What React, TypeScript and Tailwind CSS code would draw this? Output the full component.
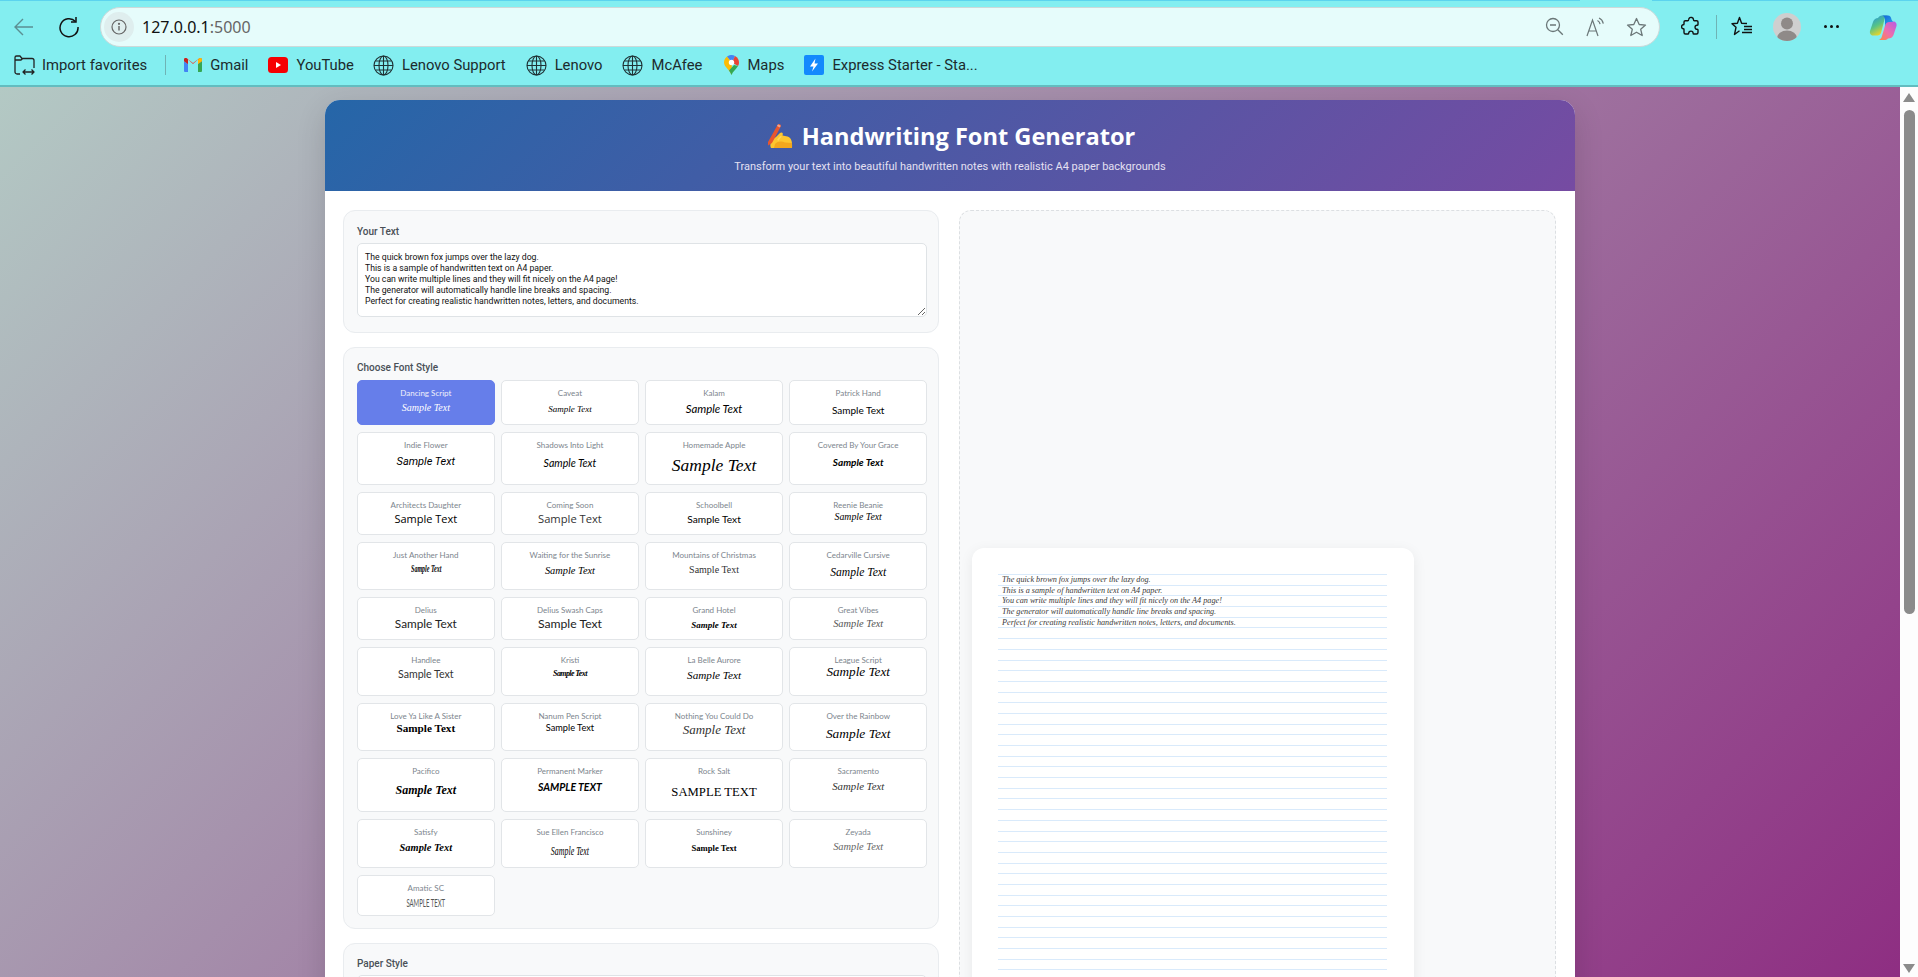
import React from "react";

const SI = "font-['Liberation_Serif',serif] italic";
const SB = "font-['Liberation_Serif',serif] italic font-bold";
const SR = "font-['Liberation_Serif',serif]";
const SRB = "font-['Liberation_Serif',serif] font-bold";
const LA = "font-['Lato',sans-serif]";
const LI = "font-['Lato',sans-serif] italic";
const LBI = "font-['Lato',sans-serif] italic font-bold";
const OS = "font-['Open_Sans',sans-serif]";
const RI = "font-['Roboto',sans-serif] italic";

type Tile = { n: string; c: string };
const rows: { h: string; tiles: Tile[] }[] = [
  { h: "h-[45px]", tiles: [
    { n: "Dancing Script", c: `${SI} text-[10px] mt-[1px]` },
    { n: "Caveat", c: `${SI} text-[9px] mt-[2px]` },
    { n: "Kalam", c: `${LI} text-[11.4px] mt-[2px]` },
    { n: "Patrick Hand", c: `${LA} text-[10px] mt-[3px]` },
  ]},
  { h: "h-[53px]", tiles: [
    { n: "Indie Flower", c: `${RI} text-[11px] mt-[3px]` },
    { n: "Shadows Into Light", c: `${LI} text-[10.6px] mt-[4px]` },
    { n: "Homemade Apple", c: `${SI} text-[17.5px] mt-[6px]` },
    { n: "Covered By Your Grace", c: `${LBI} text-[10px] mt-[3px]` },
  ]},
  { h: "h-[43px]", tiles: [
    { n: "Architects Daughter", c: `${OS} text-[11px]` },
    { n: "Coming Soon", c: `${OS} text-[11.2px] text-[#333333]` },
    { n: "Schoolbell", c: `${LA} text-[10.2px]` },
    { n: "Reenie Beanie", c: `${SI} text-[9.8px] -mt-[2px]` },
  ]},
  { h: "h-[48px]", tiles: [
    { n: "Just Another Hand", c: `${SB} text-[10px] scale-x-[0.6] mt-[0px]` },
    { n: "Waiting for the Sunrise", c: `${SI} text-[10.4px] mt-[2px]` },
    { n: "Mountains of Christmas", c: `${SR} text-[10px] mt-[1px] text-[#333333]` },
    { n: "Cedarville Cursive", c: `${SI} text-[11.6px] mt-[4px]` },
  ]},
  { h: "h-[43px]", tiles: [
    { n: "Delius", c: `${LA} text-[11.8px] text-[#222222]` },
    { n: "Delius Swash Caps", c: `${LA} text-[12.2px] text-[#222222]` },
    { n: "Grand Hotel", c: `${SB} text-[9px] mt-[1px]` },
    { n: "Great Vibes", c: `${SI} text-[10.4px] text-[#555555]` },
  ]},
  { h: "h-[49px]", tiles: [
    { n: "Handlee", c: `${LA} text-[10.6px] text-[#333333]` },
    { n: "Kristi", c: `${SB} text-[8px] tracking-[-0.6px]` },
    { n: "La Belle Aurore", c: `${SI} text-[11.2px] mt-[1px]` },
    { n: "League Script", c: `${SI} text-[13.2px] -mt-[2px]` },
  ]},
  { h: "h-[48px]", tiles: [
    { n: "Love Ya Like A Sister", c: `${SRB} text-[11.2px] -mt-[2px]` },
    { n: "Nanum Pen Script", c: `${LA} text-[9.2px] -mt-[2px]` },
    { n: "Nothing You Could Do", c: `${SI} text-[13px] text-[#333333]` },
    { n: "Over the Rainbow", c: `${SI} text-[13.4px] mt-[4px]` },
  ]},
  { h: "h-[54px]", tiles: [
    { n: "Pacifico", c: `${SB} text-[12px] mt-[5px]` },
    { n: "Permanent Marker", c: `${LBI} text-[10.5px] uppercase mt-[2px]` },
    { n: "Rock Salt", c: `${SR} text-[12.7px] uppercase mt-[7px]` },
    { n: "Sacramento", c: `${SI} text-[10.8px] mt-[1px] text-[#333333]` },
  ]},
  { h: "h-[49px]", tiles: [
    { n: "Satisfy", c: `${SB} text-[10.4px] mt-[2px]` },
    { n: "Sue Ellen Francisco", c: `${SI} text-[12px] scale-x-[0.66] mt-[5px]` },
    { n: "Sunshiney", c: `${SRB} text-[8.6px] mt-[2px]` },
    { n: "Zeyada", c: `${SI} text-[10.4px] mt-[1px] text-[#666666]` },
  ]},
  { h: "h-[41px]", tiles: [
    { n: "Amatic SC", c: `${LA} text-[12px] uppercase scale-x-[0.5] mt-[1px] text-[#555555]` },
  ]},
];

const note = [
  "The quick brown fox jumps over the lazy dog.",
  "This is a sample of handwritten text on A4 paper.",
  "You can write multiple lines and they will fit nicely on the A4 page!",
  "The generator will automatically handle line breaks and spacing.",
  "Perfect for creating realistic handwritten notes, letters, and documents.",
];

function Back() {
  return (
    <svg width="22" height="22" viewBox="0 0 22 22" fill="none" stroke="#5b8f92" strokeWidth="1.4">
      <path d="M2 11h18M10 3l-8 8 8 8" />
    </svg>
  );
}
function Reload() {
  return (
    <svg width="22" height="22" viewBox="0 0 22 22" fill="none" stroke="#111" strokeWidth="1.5">
      <path d="M17.5 5.5A9 9 0 1 0 20 11" />
      <path d="M18 1v5h-5" />
    </svg>
  );
}
function Info() {
  return (
    <svg width="16" height="16" viewBox="0 0 16 16" fill="none" stroke="#666" strokeWidth="1.2">
      <circle cx="8" cy="8" r="7" />
      <path d="M8 7v4.5" strokeWidth="1.4" />
      <circle cx="8" cy="4.8" r=".5" fill="#666" />
    </svg>
  );
}
function ZoomOut() {
  return (
    <svg width="19" height="19" viewBox="0 0 19 19" fill="none" stroke="#6b7778" strokeWidth="1.3">
      <circle cx="8" cy="8" r="6.5" />
      <path d="M5 8h6M12.8 12.8l5 5" />
    </svg>
  );
}
function ReadAloud() {
  return (
    <svg width="20" height="20" viewBox="0 0 20 20" fill="none" stroke="#6b7778" strokeWidth="1.2">
      <path d="M1 19L6.5 3l5.500 16M3 14h7" />
      <path d="M11.500 3.500c1.500.8 2.300 2 2.600 3.600M13 1c2.400 1 3.800 3 4.300 5.600" />
    </svg>
  );
}
function Star({ color = "#6b7778" }: { color?: string }) {
  return (
    <svg width="21" height="20" viewBox="0 0 21 20" fill="none" stroke={color} strokeWidth="1.3" strokeLinejoin="round">
      <path d="M10.5 1.5l2.7 6 6.3.6-4.8 4.2 1.5 6.2-5.7-3.3-5.7 3.3 1.5-6.2L1.5 8.100l6.300-.6z" />
    </svg>
  );
}
function Puzzle() {
  return (
    <svg width="20" height="21" viewBox="0 0 20 21" fill="none" stroke="#111" strokeWidth="1.4" strokeLinejoin="round">
      <path d="M8 2.500c1.500-2 4.500-1 4.500 1.200 0 .6.300 1 .8 1h2.400c.8 0 1.300.5 1.300 1.300v2.500c0 .5-.4.8-1 .8-2.500 0-2.800 4 .2 4 .5 0 .8.3.8.8v2.400c0 1-.6 1.500-1.500 1.500H13c-.6 0-.9-.3-.9-.8 0-2.800-4.400-2.800-4.400 0 0 .5-.3.8-.9.8H4.500c-.9 0-1.500-.6-1.500-1.500v-3c0-.5-.3-.7-.8-.7-2 0-2.200-4.100 0-4.100.5 0 .8-.3.800-.8V6c0-.8.500-1.300 1.300-1.300h2.500c.6 0 1-.9 1.200-2.200z" />
    </svg>
  );
}
function FavList() {
  return (
    <svg width="22" height="21" viewBox="0 0 22 21" fill="none" stroke="#111" strokeWidth="1.4" strokeLinejoin="round">
      <path d="M16 7.500l-5.400-.3L8.500 1.500 6.400 7.200 1 7.700l4 3.600-1.500 7.200 5-3.700" />
      <path d="M13 10.500h8M13 13.500h8M11 16.500h10" />
    </svg>
  );
}
function Avatar() {
  return (
    <div className="w-[28px] h-[28px] rounded-full bg-[#cfcfcf] overflow-hidden">
      <svg width="28" height="28" viewBox="0 0 28 28">
        <circle cx="14" cy="10.500" r="6" fill="#8f8a88" />
        <ellipse cx="14" cy="25" rx="10" ry="7.500" fill="#8f8a88" />
      </svg>
    </div>
  );
}
function Copilot() {
  return (
    <svg width="28" height="28" viewBox="0 0 28 28">
      <defs>
        <linearGradient id="cpa" x1="0" y1="0" x2="0.5" y2="1">
          <stop offset="0" stopColor="#1e8fe8" />
          <stop offset="0.55" stopColor="#57c486" />
          <stop offset="1" stopColor="#f4d522" />
        </linearGradient>
        <linearGradient id="cpb" x1="1" y1="0" x2="0" y2="1">
          <stop offset="0" stopColor="#b65be6" />
          <stop offset="0.55" stopColor="#ef6fa8" />
          <stop offset="1" stopColor="#fb8a3c" />
        </linearGradient>
        <linearGradient id="cpc" x1="0" y1="0" x2="1" y2="1">
          <stop offset="0" stopColor="#1263d8" />
          <stop offset="1" stopColor="#2aa8ec" />
        </linearGradient>
      </defs>
      <path d="M9 5c1-1.500 2-2.500 4-2.500h6c-2 .5-3 2-3.500 4L12 20c-.5 1.500-2 2.500-3.500 2.500H4C1.500 22.500 0.500 20 1 18l3-9c.8-2.500 3-4 5-4z" fill="url(#cpa)" />
      <path d="M19 25.500c-1 1-2 1.500-4 1.500H9.500c2-.5 3-2 3.500-4l3.500-12c.5-1.500 2-2.500 3.500-2.500h4.500c2.500 0 3.500 2.500 3 4.500l-3 9c-.8 2.500-3 3.500-5.500 3.500z" fill="url(#cpb)" />
      <path d="M13 2.500h6c2 0 3 1.500 3.500 4L24 9h-4c-1.500 0-3 1-3.500 2.500l-.5 2L16 6c-.5-2-1-3-3-3.500z" fill="url(#cpc)" />
    </svg>
  );
}
function ImportIcon() {
  return (
    <svg width="21" height="22" viewBox="0 0 21 22" fill="none" stroke="#222" strokeWidth="1.300" strokeLinejoin="round">
      <path d="M6 20H3a2 2 0 0 1-2-2V3.500A1.500 1.500 0 0 1 2.500 2h3.500l2 2.500h10A2 2 0 0 1 20 6.500V14" />
      <path d="M1 6h6l1.500-1.500" />
      <path d="M9 18h11M11.500 15.500L9 18l2.500 2.500M17.500 15.500L20 18l-2.500 2.500" />
    </svg>
  );
}
function Gmail() {
  return (
    <svg width="18" height="14" viewBox="0 0 18 14">
      <path d="M0 3v10a1 1 0 0 0 1 1h3V6z" fill="#4285f4" />
      <path d="M14 6v8h3a1 1 0 0 0 1-1V3z" fill="#34a853" />
      <path d="M0 1.500C0 0 2 -.5 3 .5L9 5l6-4.500c1-1 3-.5 3 1V3l-4 3V1.500L9 6 4 1.500V6L0 3z" fill="#ea4335" />
      <path d="M14 1.500V6l4-3V1.500C18 0 16 -.5 15 .5z" fill="#fbbc04" />
      <path d="M0 1.500V3l4 3V1.500L3 .5C2-.5 0 0 0 1.500z" fill="#c5221f" />
    </svg>
  );
}
function YouTube() {
  return (
    <svg width="20" height="16" viewBox="0 0 20 16">
      <rect width="20" height="16" rx="3.500" fill="#f60002" />
      <path d="M8 5l5 3-5 3z" fill="#fff" />
    </svg>
  );
}
function Globe() {
  return (
    <svg width="21" height="21" viewBox="0 0 21 21" fill="none" stroke="#1f3235" strokeWidth="1.100">
      <circle cx="10.500" cy="10.500" r="9.500" />
      <ellipse cx="10.500" cy="10.500" rx="4.500" ry="9.500" />
      <path d="M10.500 1v19M1 10.500h19M2.500 6h16M2.500 15h16" />
    </svg>
  );
}
function MapsPin() {
  return (
    <svg width="15" height="20" viewBox="0 0 15 20">
      <path d="M7.500 20C6 15 0 12 0 7.500A7.500 7.500 0 0 1 3 1.500l5 6z" fill="#fbbc04" />
      <path d="M3 1.500A7.500 7.500 0 0 1 11 1l-3 6.500z" fill="#4285f4" />
      <path d="M11 1a7.500 7.500 0 0 1 4 6.500c0 1.500-.5 2.500-1 3.500L8 7.500z" fill="#ea4335" />
      <path d="M14 11c-1.500 3-5 5-6.500 9-.5-1.500-1.500-3-2.500-4.500L10 10z" fill="#34a853" />
      <circle cx="7.500" cy="7.500" r="2.700" fill="#fff" />
    </svg>
  );
}
function Bolt() {
  return (
    <svg width="20" height="20" viewBox="0 0 20 20">
      <rect width="20" height="20" rx="2" fill="#1389fd" />
      <path d="M11.500 3.500L6 11.500h3.500L8 16.500l6-8h-3.500z" fill="#fff" />
    </svg>
  );
}
function WritingHand() {
  return (
    <svg width="28" height="26" viewBox="0 0 28 26" role="img" aria-label="writing hand">
      <path d="M6 25C4 21 7 16 11 14l4-4c2-1.500 3.500 0 2.500 2.500l5 1C26 14.500 27.500 18 27 25z" fill="#fdc62f" />
      <path d="M10 21c3-3 7-3 10-1.500l7 .5v5H9z" fill="#f3a71d" />
      <path d="M3 19L12 3c.7-1.500 2-2.300 3-1.800s1 2 .4 3L7 20l-4 2.500z" fill="#e8562e" />
      <path d="M13 1.200l2.800 1.500-1 1.800L12 3z" fill="#f5a58d" />
      <path d="M12 17c1-2 2-3 3.500-4l1.500.8c-1.500 1-2.500 2.200-3.200 4z" fill="#fdd65c" />
    </svg>
  );
}

const bookmarks: { icon: React.ReactNode; label: string; w: string; gap: string }[] = [
  { icon: <Gmail />, label: "Gmail", w: "w-[18px]", gap: "mr-[20px]" },
  { icon: <YouTube />, label: "YouTube", w: "w-[20px]", gap: "mr-[19px]" },
  { icon: <Globe />, label: "Lenovo Support", w: "w-[21px]", gap: "mr-[20px]" },
  { icon: <Globe />, label: "Lenovo", w: "w-[21px]", gap: "mr-[20px]" },
  { icon: <Globe />, label: "McAfee", w: "w-[21px]", gap: "mr-[22px]" },
  { icon: <MapsPin />, label: "Maps", w: "w-[15px]", gap: "mr-[20px]" },
  { icon: <Bolt />, label: "Express Starter - Sta...", w: "w-[20px]", gap: "" },
];

export default function App() {
  return (
    <div className="h-screen w-full overflow-hidden flex flex-col font-['Roboto',sans-serif]">
      {/* Browser chrome */}
      <header className="h-[87px] shrink-0 bg-[#83eef0] border-b-2 border-[#63bcbf] flex flex-col">
        <div className="h-[1px] flex">
          <div className="w-[1580px] bg-[#5cd3ee]" />
          <div className="w-[72px]" />
          <div className="flex-1 bg-[#5cd3ee]" />
        </div>
        <div className="h-[45px] mt-[3px] flex items-center">
          <div className="ml-[13px] w-[22px] flex"><Back /></div>
          <div className="ml-[23px] w-[22px] flex"><Reload /></div>
          <div className="ml-[20px] h-[40px] w-[1560px] rounded-full bg-[#e6fcfb] border-[1.5px] border-[#cdd9d9] flex items-center pl-[3px]">
            <div className="w-[30px] h-[30px] rounded-full bg-[#dfeeee] flex items-center justify-center"><Info /></div>
            <div className="ml-[8px] text-[16px] text-[#111] font-['Noto_Sans',sans-serif]">
              127.0.0.1<span className="text-[#666]">:5000</span>
            </div>
            <div className="ml-auto flex items-center mr-[12px]">
              <ZoomOut />
              <div className="ml-[22px] flex"><ReadAloud /></div>
              <div className="ml-[20px] flex"><Star /></div>
            </div>
          </div>
          <div className="ml-[21px] flex"><Puzzle /></div>
          <div className="ml-[15px] w-[1px] h-[24px] bg-[#6fb3b5]" />
          <div className="ml-[14px] flex"><FavList /></div>
          <div className="ml-[20px] flex"><Avatar /></div>
          <div className="ml-[23px] flex gap-[3px]">
            <span className="w-[3px] h-[3px] rounded-full bg-[#111]" />
            <span className="w-[3px] h-[3px] rounded-full bg-[#111]" />
            <span className="w-[3px] h-[3px] rounded-full bg-[#111]" />
          </div>
          <div className="ml-[30px] flex"><Copilot /></div>
        </div>
        <nav className="flex-1 flex items-center text-[14.8px] text-[#1c2b2d] font-['Roboto',sans-serif] pb-[4px]">
          <div className="ml-[14px] flex"><ImportIcon /></div>
          <span className="ml-[7px]">Import favorites</span>
          <div className="ml-[18px] w-[1px] h-[20px] bg-[#6fb3b5]" />
          <div className="ml-[18px] flex items-center">
            {bookmarks.map((b) => (
              <div key={b.label + b.gap} className={`flex items-center ${b.gap}`}>
                <div className={`${b.w} flex justify-center`}>{b.icon}</div>
                <span className="ml-[8px] whitespace-nowrap">{b.label}</span>
              </div>
            ))}
          </div>
        </nav>
      </header>

      {/* Page */}
      <div className="flex-1 min-h-0 flex">
        <main className="flex-1 min-w-0 overflow-hidden bg-[linear-gradient(135deg,#b3c9c4,#8e2e82)] pt-[13px]">
          <div className="w-[1250px] mx-auto bg-white rounded-t-[15px] shadow-[0_10px_30px_rgba(0,0,0,0.14)] min-h-[1000px]">
            <div className="h-[91px] rounded-t-[15px] bg-[linear-gradient(135deg,#2566a8,#764ba2)] flex flex-col items-center text-white">
              <div className="mt-[21px] flex items-center gap-[9px] h-[30px]">
                <WritingHand />
                <h1 className="text-[23.6px] leading-[30px] font-bold font-['Open_Sans',sans-serif]">Handwriting Font Generator</h1>
              </div>
              <p className="mt-[9px] text-[11px] leading-[14px] text-[#e4e0f2]">
                Transform your text into beautiful handwritten notes with realistic A4 paper backgrounds
              </p>
            </div>

            <div className="grid grid-cols-[596px_597px] gap-[20px] px-[18px] pt-[19px] items-start">
              {/* Left column */}
              <div className="flex flex-col gap-[14px]">
                <section className="h-[123px] rounded-[12px] bg-[#f8f9fa] border border-[#e9ecef] pl-[13px] pr-[11px] pt-[15px]">
                  <label className="block text-[10px] leading-[12px] font-medium text-[#495057]">Your Text</label>
                  <textarea
                    readOnly
                    defaultValue={note.join("\n")}
                    className="mt-[5px] block w-full h-[74px] resize-y rounded-[5px] bg-white border border-[#dfe3e6] px-[7px] pt-[8px] text-[8.7px] leading-[11px] text-[#111] outline-none"
                  />
                </section>

                <section className="rounded-[12px] bg-[#f8f9fa] border border-[#e9ecef] pl-[13px] pr-[11px] pt-[14px] h-[582px]">
                  <label className="block text-[10px] leading-[12px] font-medium text-[#495057]">Choose Font Style</label>
                  <div className="mt-[6px] flex flex-col gap-[7px]">
                    {rows.map((r, i) => (
                      <div key={r.tiles[0].n} className="grid grid-cols-4 gap-x-[6.500px]">
                        {r.tiles.map((t) => {
                          const active = i === 0 && t.n === "Dancing Script";
                          return (
                            <div
                              key={t.n}
                              className={`${r.h} rounded-[5px] border flex flex-col items-center pt-[7px] ${
                                active ? "bg-[#667eea] border-[#667eea] text-white" : "bg-white border-[#e2e5e8] text-black"
                              }`}
                            >
                              <div className={`text-[8px] leading-[10px] -mb-[1px] whitespace-nowrap font-['Lato',sans-serif] ${active ? "text-[#f0f0fa]" : "text-[#7c858d]"}`}>{t.n}</div>
                              <div className={`leading-[20px] whitespace-nowrap ${t.c}`}>Sample Text</div>
                            </div>
                          );
                        })}
                      </div>
                    ))}
                  </div>
                </section>

                <section className="rounded-[12px] bg-[#f8f9fa] border border-[#e9ecef] pl-[13px] pr-[11px] pt-[14px] h-[120px]">
                  <label className="block text-[10px] leading-[12px] font-medium text-[#495057]">Paper Style</label>
                  <div className="mt-[5px] h-[30px] rounded-[5px] bg-white border border-[#dfe3e6]" />
                </section>
              </div>

              {/* Right column */}
              <section className="h-[1000px] rounded-[12px] bg-[#f8f9fa] border border-dashed border-[#dcdfe2] pl-[12px] pt-[337px]">
                <div className="w-[442px] h-[640px] rounded-[12px] bg-white shadow-[0_3px_14px_rgba(0,0,0,0.07)] pt-[26px] pl-[26px] pr-[27px]">
                  <div>
                    {Array.from({ length: 40 }, (_, i) => (
                      <div key={i} className="h-[10.700px] border-t border-[#d9eafb] pl-[4px] text-[8.2px] leading-[10px] italic text-[#3a3a3a] whitespace-nowrap font-['Liberation_Serif',serif]">
                        {note[i] ?? ""}
                      </div>
                    ))}
                  </div>
                </div>
              </section>
            </div>
          </div>
        </main>

        {/* Scrollbar */}
        <aside className="w-[18px] shrink-0 bg-[#fdfdfd] flex flex-col items-center">
          <div className="mt-[6px] w-0 h-0 border-x-[6.500px] border-x-transparent border-b-[9px] border-b-[#8b8b8b]" />
          <div className="mt-[8px] h-[504px] w-[11px] rounded-full bg-[#8b8b8b]" />
          <div className="mt-auto mb-[4px] w-0 h-0 border-x-[6.500px] border-x-transparent border-t-[9px] border-t-[#8b8b8b]" />
        </aside>
      </div>
    </div>
  );
}
